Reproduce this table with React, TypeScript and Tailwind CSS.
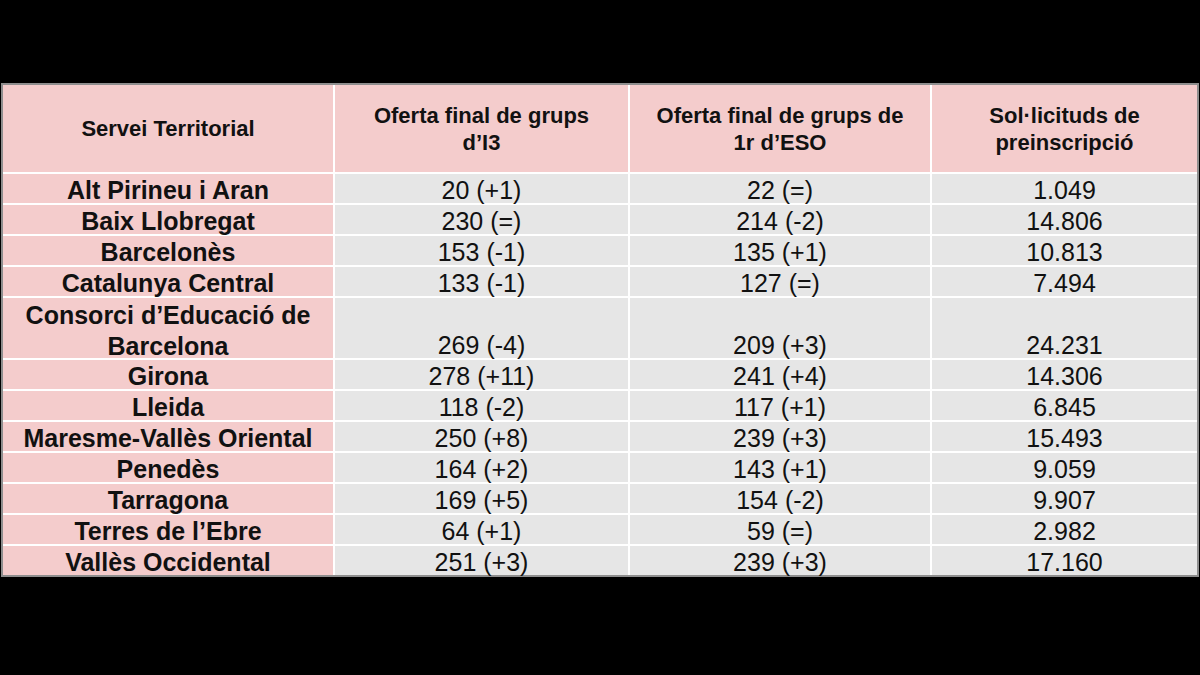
const rows = [
  { name: "Alt Pirineu i Aran", i3: "20 (+1)", eso: "22 (=)", sol: "1.049" },
  { name: "Baix Llobregat", i3: "230 (=)", eso: "214 (-2)", sol: "14.806" },
  { name: "Barcelonès", i3: "153 (-1)", eso: "135 (+1)", sol: "10.813" },
  { name: "Catalunya Central", i3: "133 (-1)", eso: "127 (=)", sol: "7.494" },
  { name: "Consorci d’Educació de Barcelona", i3: "269 (-4)", eso: "209 (+3)", sol: "24.231", tall: true },
  { name: "Girona", i3: "278 (+11)", eso: "241 (+4)", sol: "14.306" },
  { name: "Lleida", i3: "118 (-2)", eso: "117 (+1)", sol: "6.845" },
  { name: "Maresme-Vallès Oriental", i3: "250 (+8)", eso: "239 (+3)", sol: "15.493" },
  { name: "Penedès", i3: "164 (+2)", eso: "143 (+1)", sol: "9.059" },
  { name: "Tarragona", i3: "169 (+5)", eso: "154 (-2)", sol: "9.907" },
  { name: "Terres de l’Ebre", i3: "64 (+1)", eso: "59 (=)", sol: "2.982" },
  { name: "Vallès Occidental", i3: "251 (+3)", eso: "239 (+3)", sol: "17.160" },
]

export default function App() {
  return (
    <div
      className="h-[675px] w-[1200px] bg-black pt-[83px] text-[#111]"
      style={{ fontFamily: '"Liberation Sans", Arial, sans-serif' }}
    >
      <div className="ml-[1px] w-[1198px] border-2 border-[#8e8e8e]">
        <div className="grid grid-cols-[330px_293px_300px_265px] gap-[2px] bg-white">
          {/* Header */}
          <div className="flex h-[87px] items-center justify-center bg-[#f4cccc] text-[22px] font-bold">
            Servei Territorial
          </div>
          <div className="flex h-[87px] items-center justify-center bg-[#f4cccc] text-center text-[22px] font-bold leading-[27px]">
            Oferta final de grups
            <br />
            d’I3
          </div>
          <div className="flex h-[87px] items-center justify-center bg-[#f4cccc] text-center text-[22px] font-bold leading-[27px]">
            Oferta final de grups de
            <br />
            1r d’ESO
          </div>
          <div className="flex h-[87px] items-center justify-center bg-[#f4cccc] text-center text-[22px] font-bold leading-[27px]">
            Sol·licituds de
            <br />
            preinscripció
          </div>

          {/* Body */}
          {rows.map((r) => (
            <Row key={r.name} {...r} />
          ))}
        </div>
      </div>
    </div>
  )
}

function Row({ name, i3, eso, sol, tall }: { name: string; i3: string; eso: string; sol: string; tall?: boolean }) {
  const cell = tall
    ? "flex h-[60px] items-end justify-center bg-[#e6e6e6] text-[25px] leading-[25px]"
    : "flex h-[29px] items-center justify-center bg-[#e6e6e6] pt-[4px] text-[25px] leading-[29px]"
  return (
    <>
      <div
        className={`flex ${tall ? "h-[60px] pt-[6px]" : "h-[29px] pt-[4px]"} items-center justify-center bg-[#f4cccc] px-2 text-center text-[25px] font-bold leading-[31px]`}
      >
        {tall ? (
          <span>
            Consorci d’Educació de
            <br />
            Barcelona
          </span>
        ) : (
          name
        )}
      </div>
      <div className={cell}>{i3}</div>
      <div className={cell}>{eso}</div>
      <div className={cell}>{sol}</div>
    </>
  )
}
